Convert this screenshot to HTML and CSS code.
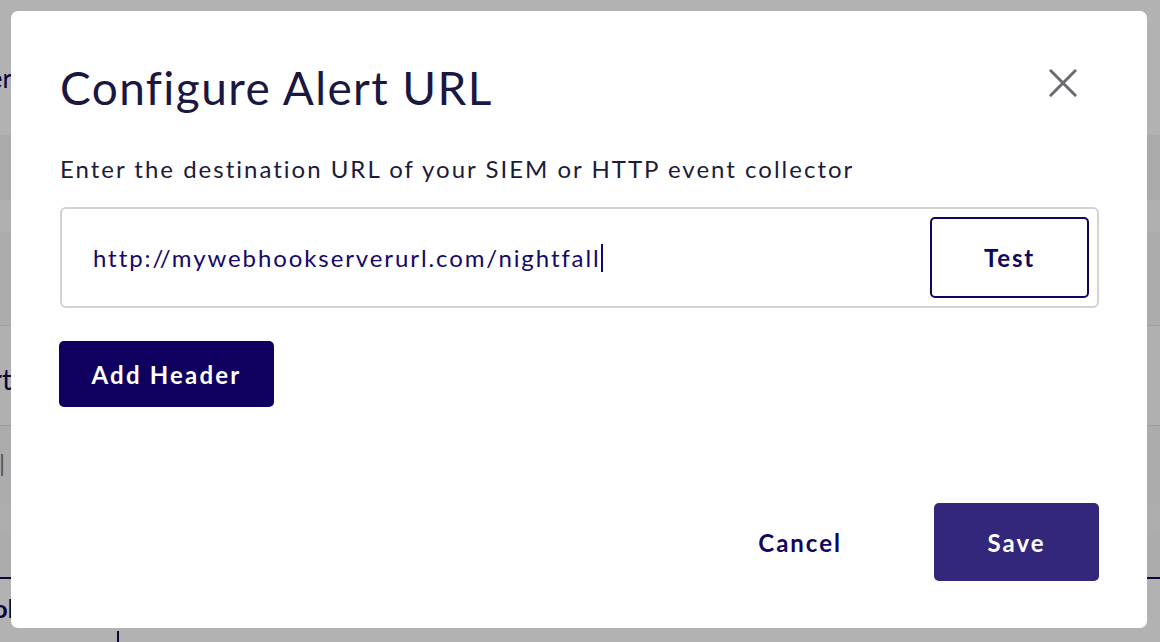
FILE: index.html
```html
<!DOCTYPE html>
<html lang="en">
<head>
<meta charset="utf-8">
<title>Configure Alert URL</title>
<link rel="stylesheet" href="styles.css">
</head>
<body>
<div class="app">
  <div class="band band-top"><span class="cut cut-er">Header</span></div>
  <div class="band band-a"></div>
  <div class="band band-b"></div>
  <div class="band band-c"></div>
  <div class="band band-d"><span class="cut cut-t">Alert</span></div>
  <div class="band band-e"><span class="cut cut-bar">|</span></div>
  <div class="band band-f"></div>
  <div class="band band-g"></div>
  <div class="band band-h"><span class="cut-left">John</span></div>
  <div class="band band-i"><span class="vline"></span></div>
</div>
<div class="overlay"></div>
<div class="modal" role="dialog" aria-labelledby="modal-title">
  <div class="modal-header">
    <h1 id="modal-title" class="modal-title">Configure Alert URL</h1>
    <button class="close-btn" aria-label="Close">
      <svg width="32" height="32" viewBox="0 0 32 32"><path d="M3 3 L29 29 M29 3 L3 29" stroke="#6b6a73" stroke-width="3.2" stroke-linecap="round" fill="none"/></svg>
    </button>
  </div>
  <p class="modal-desc">Enter the destination URL of your SIEM or HTTP event collector</p>
  <div class="url-field">
    <span class="url-text">http://mywebhookserverurl.com/nightfall</span><span class="caret"></span>
    <button class="btn-test">Test</button>
  </div>
  <div class="row-add">
    <button class="btn-add">Add Header</button>
  </div>
  <div class="modal-footer">
    <button class="btn-cancel">Cancel</button>
    <button class="btn-save">Save</button>
  </div>
</div>
</body>
</html>
```
FILE: styles.css
```css
html, body {
  margin: 0;
  padding: 0;
  width: 1160px;
  height: 642px;
  overflow: hidden;
  font-family: Lato, "Open Sans", sans-serif;
}

.app {
  display: flex;
  flex-direction: column;
  width: 1160px;
  height: 642px;
  background: #ffffff;
}

.band {
  position: relative;
  flex: none;
  display: flex;
  align-items: center;
  overflow: hidden;
  color: #100a5a;
}

.band-top { height: 135px; background: #ffffff; }
.band-a { height: 65px; background: #f4f4f4; }
.band-b { height: 32px; background: #fbfbfb; }
.band-c { height: 93px; background: #f6f6f6; border-bottom: 1px solid #e2e2e2; }
.band-d { height: 99px; background: #fcfcfc; border-bottom: 1px solid #e2e2e2; }
.band-e { height: 77px; background: #f6f6f6; }
.band-f { height: 31px; background: #fafafa; }
.band-g { height: 43px; background: #f7f7f7; border-bottom: 2px solid #100a5a; }
.band-h { height: 52px; background: #ffffff; }
.band-i { flex: 1; background: #ffffff; }

.cut {
  position: absolute;
  right: calc(100% - 12px);
  white-space: nowrap;
}
.cut-er { top: 62px; font-size: 26px; }
.cut-t { top: 36px; font-size: 28px; }
.cut-bar { top: 22px; font-size: 24px; color: #777; right: calc(100% - 5px); }

.cut-left {
  position: absolute;
  left: -17px;
  top: 14px;
  white-space: nowrap;
  font-size: 25px;
  font-weight: 700;
}

.vline {
  position: absolute;
  left: 117px;
  top: 0;
  width: 2px;
  height: 40px;
  background: #100a5a;
}

.overlay {
  position: fixed;
  inset: 0;
  background: rgba(0, 0, 0, 0.3);
}

.modal {
  position: fixed;
  left: 11px;
  top: 11px;
  width: 1136px;
  height: 617px;
  box-sizing: border-box;
  padding: 51px 48px 47px 48px;
  background: #ffffff;
  border-radius: 7px;
  display: flex;
  flex-direction: column;
}

.modal-header {
  display: flex;
  align-items: center;
  justify-content: space-between;
  height: 52px;
}

.modal-title {
  margin: 0 0 0 1px;
  font-size: 46px;
  line-height: 52px;
  font-weight: 400;
  color: #1a1840;
  letter-spacing: 1.4px;
}

.close-btn {
  border: none;
  background: none;
  padding: 0;
  margin: 0 21px 10px 0;
  width: 30px;
  height: 30px;
  display: flex;
}

.close-btn svg {
  width: 30px;
  height: 30px;
}

.modal-desc {
  margin: 40px 0 0 1px;
  font-size: 24px;
  line-height: 30px;
  color: #1c1b3a;
  letter-spacing: 2px;
}

.url-field {
  margin: 23px 0 0 1px;
  height: 101px;
  box-sizing: border-box;
  border: 2px solid #d2d2d2;
  border-radius: 6px;
  display: flex;
  align-items: center;
  padding: 0 8px 0 31px;
}

.url-text {
  font-size: 24px;
  color: #14086a;
  letter-spacing: 1.9px;
}

.caret {
  width: 2px;
  height: 28px;
  background: #14086a;
}

.btn-test {
  margin-left: auto;
  width: 159px;
  height: 81px;
  box-sizing: border-box;
  border: 2px solid #0f0660;
  border-radius: 5px;
  background: #ffffff;
  color: #0f0660;
  font-family: inherit;
  font-size: 24px;
  font-weight: 700;
  letter-spacing: 1.8px;
}

.row-add {
  margin-top: 33px;
  display: flex;
}

.btn-add {
  width: 215px;
  height: 66px;
  border: none;
  border-radius: 5px;
  background: #0f0060;
  color: #ffffff;
  font-family: inherit;
  font-size: 24px;
  font-weight: 700;
  letter-spacing: 2.2px;
}

.modal-footer {
  margin-top: auto;
  display: flex;
  justify-content: flex-end;
  align-items: center;
}

.btn-cancel {
  border: none;
  background: none;
  padding: 0;
  margin-right: 92px;
  color: #0f0660;
  font-family: inherit;
  font-size: 24px;
  font-weight: 700;
  letter-spacing: 2px;
}

.btn-save {
  width: 165px;
  height: 78px;
  border: none;
  border-radius: 5px;
  background: #32277a;
  color: #ffffff;
  font-family: inherit;
  font-size: 24px;
  font-weight: 700;
  letter-spacing: 2px;
}
```
